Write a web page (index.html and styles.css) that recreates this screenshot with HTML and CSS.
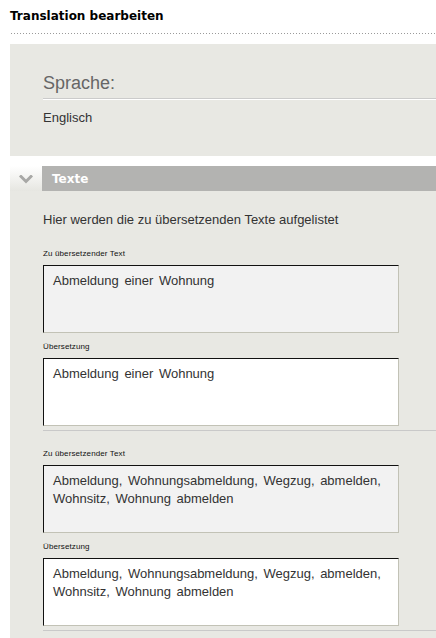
FILE: index.html
```html
<!DOCTYPE html>
<html lang="de">
<head>
<meta charset="utf-8">
<title>Translation bearbeiten</title>
<link rel="stylesheet" href="styles.css">
</head>
<body>
<div class="page">
  <h1 class="title">Translation bearbeiten</h1>

  <section class="lang">
    <h2 class="lang-head">Sprache:</h2>
    <p class="lang-value">Englisch</p>
  </section>

  <section class="panel">
    <header class="panel-head">
      <span class="toggle">
        <svg width="14" height="9" viewBox="0 0 14 9" aria-hidden="true">
          <polyline points="2,1.5 7,6.5 12,1.5" fill="none" stroke="#a8a8a6" stroke-width="3" stroke-linecap="square"/>
        </svg>
      </span>
      <span class="panel-title">Texte</span>
    </header>

    <div class="panel-body">
      <p class="intro">Hier werden die zu übersetzenden Texte aufgelistet</p>

      <div class="entry">
        <label class="field-label">Zu übersetzender Text</label>
        <textarea class="field source" readonly>Abmeldung einer Wohnung</textarea>
        <label class="field-label">Übersetzung</label>
        <textarea class="field target">Abmeldung einer Wohnung</textarea>
      </div>

      <div class="entry">
        <label class="field-label">Zu übersetzender Text</label>
        <textarea class="field source" readonly>Abmeldung, Wohnungsabmeldung, Wegzug, abmelden, Wohnsitz, Wohnung abmelden</textarea>
        <label class="field-label">Übersetzung</label>
        <textarea class="field target">Abmeldung, Wohnungsabmeldung, Wegzug, abmelden, Wohnsitz, Wohnung abmelden</textarea>
      </div>
    </div>
  </section>
</div>
</body>
</html>
```

FILE: styles.css
```css
html, body {
  margin: 0;
  padding: 0;
  background: #fff;
}

body {
  font-family: "Liberation Sans", Arial, sans-serif;
  color: #333;
}

.page {
  padding-left: 10px;
}

/* Page title with a dotted rule underneath */
.title {
  margin: 0 0 10px;
  padding: 8px 0 10px;
  font-family: "DejaVu Sans", Verdana, sans-serif;
  font-size: 12px;
  line-height: 16px;
  font-weight: bold;
  color: #000;
  background-image: linear-gradient(to right, #9a9a9a 1px, transparent 1px);
  background-size: 3px 1px;
  background-position: 1px 100%;
  background-repeat: repeat-x;
}

/* Language box */
.lang {
  background: #e8e8e3;
  padding: 28px 0 30px 33px;
}

.lang-head {
  margin: 0;
  padding-bottom: 4px;
  font-size: 18px;
  line-height: 22px;
  font-weight: normal;
  color: #666;
  border-bottom: 1px solid #cbcbcb;
  box-shadow: 0 1px 0 #fff;
}

.lang-value {
  margin: 11px 0 0;
  font-size: 13px;
  line-height: 16px;
  color: #333;
}

/* Collapsible panel */
.panel {
  margin-top: 10px;
}

.panel-head {
  display: flex;
  height: 25px;
}

.toggle {
  width: 32px;
  display: flex;
  align-items: center;
  justify-content: center;
  padding-top: 1px;
  box-sizing: border-box;
  background: linear-gradient(to bottom, #ffffff 0%, #e6e6e1 100%);
}

.toggle svg {
  display: block;
}

.panel-title {
  flex: 1;
  background: #b3b3b1;
  color: #fff;
  font-family: "DejaVu Sans", Verdana, sans-serif;
  font-size: 12px;
  font-weight: bold;
  line-height: 23px;
  padding: 2px 0 0 10px;
}

.panel-body {
  background: #e8e8e3;
  padding: 21px 0 30px 33px;
}

.intro {
  margin: 0;
  font-size: 13px;
  line-height: 16px;
  color: #333;
}

/* One text / translation pair */
.entry {
  margin-top: 17px;
  border-bottom: 1px solid #c9c9c9;
}

.intro + .entry {
  margin-top: 20px;
}

.field-label {
  display: block;
  margin-bottom: 5px;
  font-size: 8px;
  line-height: 12px;
  letter-spacing: 0.12px;
  color: #111;
}

.field {
  display: block;
  box-sizing: border-box;
  width: 356px;
  height: 68px;
  margin: 0 0 8px;
  padding: 6px 9px;
  border-style: solid;
  border-width: 1px;
  border-color: #111 #c2c2b6 #c2c2b6 #111;
  border-radius: 0;
  font-family: "Liberation Sans", Arial, sans-serif;
  font-size: 13px;
  line-height: 18px;
  word-spacing: 2px;
  color: #333;
  resize: none;
  overflow: hidden;
  outline: none;
}

.source {
  background: #f2f2f2;
}

.target {
  background: #fff;
  margin-bottom: 4px;
}
```
